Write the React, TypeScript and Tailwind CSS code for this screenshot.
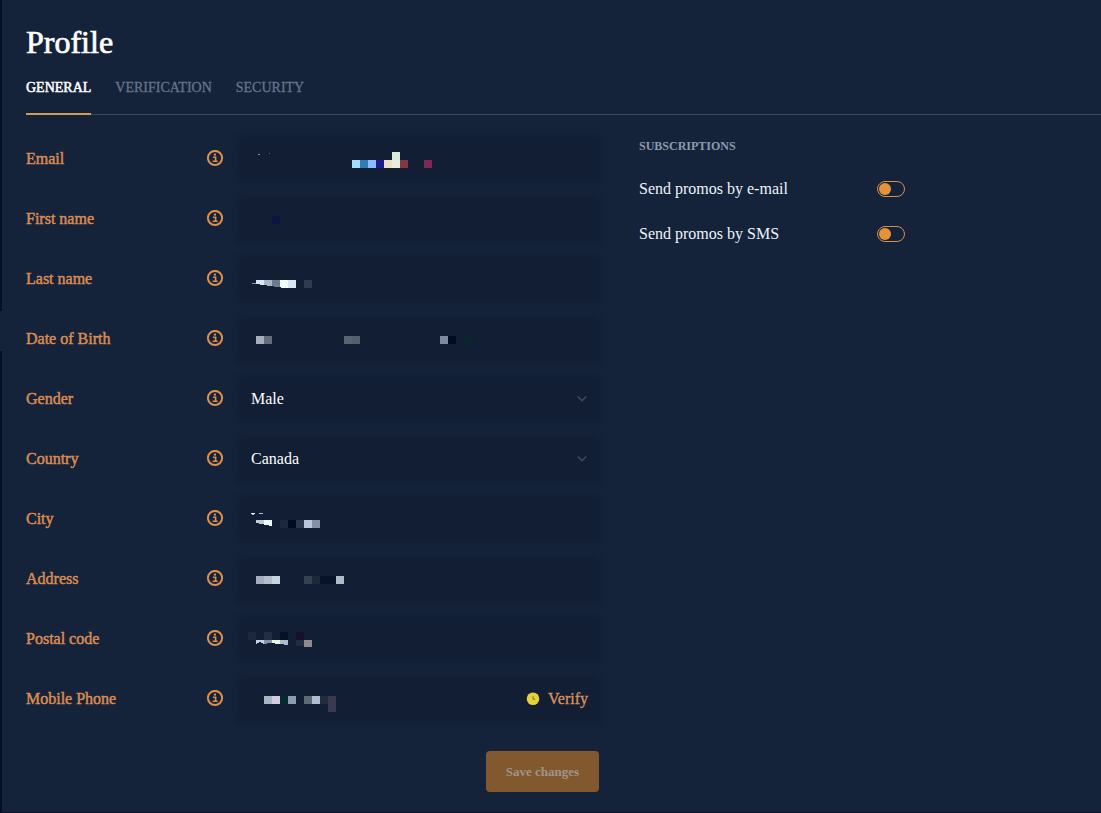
import React, { useState } from 'react';
import { clsx } from 'clsx';

// [x, y, width, height, color] inside the field box
type Cell = [number, number, number, number, string];

interface ProfileField {
  id: string;
  label: string;
  type: 'text' | 'select';
  value?: string;
  options?: string[];
  mask?: Cell[];
  cuts?: string;
  verifiable?: boolean;
}

const TABS = ['General', 'Verification', 'Security'];

const FIELDS: ProfileField[] = [
  {
    id: 'email', label: 'Email', type: 'text',
    mask: [
      [18, 16, 2, 1, '#8793a3'], [29, 15, 1, 1, '#5a6879'],
      [112, 22, 8, 8, '#a5dcfb'], [120, 22, 8, 8, '#337bb4'], [128, 22, 8, 8, '#8fbcff'],
      [136, 22, 8, 8, '#1b1d8a'], [144, 22, 8, 8, '#ece0c4'], [152, 14, 8, 8, '#d9eed9'],
      [152, 22, 8, 8, '#e8ebe0'], [160, 22, 8, 8, '#833646'], [184, 22, 8, 8, '#7c2859'],
    ],
  },
  {
    id: 'firstName', label: 'First name', type: 'text',
    mask: [[32, 18, 8, 8, '#0a1640']],
  },
  {
    id: 'lastName', label: 'Last name', type: 'text',
    mask: [
      [12, 25, 4, 1, '#8793a3'],
      [16, 22, 8, 8, '#dbe5f5'], [24, 22, 8, 8, '#aab6c6'], [32, 22, 8, 8, '#6f7b8f'],
      [40, 22, 8, 8, '#f4ffff'], [48, 22, 8, 8, '#dbe5f5'], [64, 22, 8, 8, '#2f3b50'],
    ],
    cuts: '16,26 44,30 16,30',
  },
  {
    id: 'birthDate', label: 'Date of Birth', type: 'text',
    mask: [
      [16, 18, 8, 8, '#a4afbb'], [24, 18, 8, 8, '#626d7e'],
      [104, 18, 8, 8, '#566573'], [112, 18, 8, 8, '#50606f'],
      [200, 18, 8, 8, '#7f8a9c'], [208, 18, 8, 8, '#020c1f'], [224, 18, 8, 8, '#0a2530'],
    ],
  },
  { id: 'gender', label: 'Gender', type: 'select', value: 'Male', options: ['Male', 'Female'] },
  { id: 'country', label: 'Country', type: 'select', value: 'Canada', options: ['Canada'] },
  {
    id: 'city', label: 'City', type: 'text',
    mask: [
      [11, 15, 4, 1, '#e5edf5'], [12, 16, 2, 1, '#b5c0cc'], [19, 15, 4, 1, '#b5c0cc'],
      [16, 22, 8, 8, '#c2cbd8'], [24, 22, 8, 8, '#eafaff'], [40, 22, 8, 8, '#1a2a3c'],
      [48, 22, 8, 8, '#000c1f'], [56, 22, 8, 8, '#2b374a'], [64, 22, 8, 8, '#bcc6dc'],
      [72, 22, 8, 8, '#8490a8'],
    ],
    cuts: '16,25 32,28 32,30 16,30',
  },
  {
    id: 'address', label: 'Address', type: 'text',
    mask: [
      [16, 18, 8, 8, '#a2adc0'], [24, 18, 8, 8, '#b4becb'], [32, 18, 8, 8, '#c8d4e0'],
      [64, 18, 8, 8, '#354050'], [72, 18, 8, 8, '#1d293a'], [80, 18, 16, 8, '#071427'],
      [96, 18, 8, 8, '#adbccb'],
    ],
  },
  {
    id: 'postalCode', label: 'Postal code', type: 'text',
    mask: [
      [8, 14, 8, 8, '#1b2a3b'], [24, 14, 8, 8, '#222e45'], [40, 14, 8, 8, '#041227'],
      [56, 14, 8, 8, '#180f28'], [16, 22, 8, 8, '#c8d0e4'], [24, 22, 8, 8, '#8891a8'],
      [32, 22, 8, 8, '#e9f8df'], [40, 22, 8, 8, '#aebccb'], [56, 22, 8, 6, '#242c3f'],
      [64, 22, 8, 7, '#8f8a8c'],
    ],
    cuts: '16,26 20,24 24,26 30,25 48,27 48,30 16,30',
  },
  {
    id: 'phone', label: 'Mobile Phone', type: 'text', verifiable: true,
    mask: [
      [24, 18, 8, 8, '#a8b5c4'], [32, 18, 8, 8, '#d5cbdd'], [40, 18, 8, 8, '#04292e'],
      [48, 18, 8, 8, '#8d9db0'], [64, 18, 8, 8, '#5a6b72'], [72, 18, 8, 8, '#b0bcd2'],
      [80, 18, 8, 8, '#232b3c'], [88, 18, 8, 16, '#3a394f'],
    ],
  },
];

const SUBSCRIPTIONS = [
  { id: 'promoEmail', label: 'Send promos by e-mail' },
  { id: 'promoSms', label: 'Send promos by SMS' },
];

const InfoIcon = () => (
  <svg width="18" height="18" viewBox="0 0 18 18" fill="none" stroke="#df8f4d">
    <circle cx="9" cy="8" r="7.1" strokeWidth="2" />
    <path d="M7 7.2h2.6v4.3M6.6 11.3h5" strokeWidth="1.6" />
    <path d="M7.9 4.6h2.1" strokeWidth="2" />
  </svg>
);

const ClockIcon = () => (
  <svg width="14" height="14" viewBox="0 0 14 14">
    <circle cx="7" cy="6.8" r="6.3" fill="#e6d13c" />
    <path d="M7 4v3.2h2.2" fill="none" stroke="#7c7426" />
  </svg>
);

const Chevron = () => (
  <svg className="absolute right-3 top-1/2 -translate-y-1/2 pointer-events-none" width="10" height="8" viewBox="0 0 10 8">
    <path d="M.8 1.5 5 5.8l4.2-4.3" fill="none" stroke="#3f4d60" strokeWidth="1.4" />
  </svg>
);

const FieldRow: React.FC<{ field: ProfileField }> = ({ field }) => {
  const [value, setValue] = useState(field.value || '');
  const control = 'w-full h-full bg-transparent px-[11px] text-white text-base outline-none appearance-none';

  return (
    <div className="flex items-center h-[42px]">
      <label htmlFor={field.id} className="flex-1 text-base text-[#d98b52] [-webkit-text-stroke:0.5px]">{field.label}</label>
      <button type="button" aria-label={`About ${field.label}`} className="mr-4"><InfoIcon /></button>
      <div className="relative w-[359px] h-full rounded bg-[#111e33] shadow-[0_0_6px_#111e33]">
        {field.type === 'select' ? (
          <>
            <select id={field.id} value={value} onChange={e => setValue(e.target.value)} className={control}>
              {field.options?.map(o => <option key={o}>{o}</option>)}
            </select>
            <Chevron />
          </>
        ) : (
          <input id={field.id} value={value} onChange={e => setValue(e.target.value)} className={control} />
        )}
        {field.mask && (
          <svg className="absolute inset-0 w-full h-full pointer-events-none" shapeRendering="crispEdges">
            {field.mask.map(([x, y, w, h, fill], i) => <rect key={i} x={x} y={y} width={w} height={h} fill={fill} />)}
            {field.cuts && <polygon points={field.cuts} fill="#111e33" />}
          </svg>
        )}
        {field.verifiable && (
          <div className="absolute inset-y-0 right-[11px] flex items-center gap-2">
            <ClockIcon />
            <button type="button" className="text-base text-[#dd925e] [-webkit-text-stroke:0.3px]">Verify</button>
          </div>
        )}
      </div>
    </div>
  );
};

const Toggle: React.FC<{ id: string; label: string }> = ({ id, label }) => {
  const [on, setOn] = useState(false);
  return (
    <div className="flex items-center justify-between h-[45px]">
      <label htmlFor={id} className="text-base text-[#eef5fb]">{label}</label>
      <input
        id={id}
        type="checkbox"
        role="switch"
        checked={on}
        onChange={() => setOn(!on)}
        className="appearance-none flex items-center w-7 h-4 rounded-full border border-[#d98f45] px-px before:block before:size-3 before:rounded-full before:bg-[#e4933c] checked:justify-end"
      />
    </div>
  );
};

export default function App() {
  const [activeTab, setActiveTab] = useState('General');

  return (
    <div className="min-h-screen flex bg-[#14223a] border-b border-[#081329] font-['Liberation_Serif',serif]">
      <div className="w-[2px] shrink-0 flex flex-col">
        <div className="h-[311px] bg-[#04102a]" />
        <div className="h-10" />
        <div className="flex-1 bg-[#04102a]" />
      </div>

      <div className="flex-1 pl-6">
        <h1 className="pt-6 text-[32px] leading-9 text-white [-webkit-text-stroke:0.7px]">Profile</h1>

        <nav className="flex gap-6 h-[55px] border-b border-[#3c485b]">
          {TABS.map(tab => (
            <button
              key={tab}
              type="button"
              onClick={() => setActiveTab(tab)}
              className={clsx(
                'h-[55px] pt-0.5 border-b-2 text-sm uppercase',
                activeTab === tab ? 'border-[#d29a55] text-white [-webkit-text-stroke:0.5px]' : 'border-transparent text-[#66748a] [-webkit-text-stroke:0.3px]'
              )}
            >
              {tab}
            </button>
          ))}
        </nav>

        <div className="flex gap-10 pt-[23px]">
          <form className="w-[573px] shrink-0 flex flex-col gap-[18px]" onSubmit={e => e.preventDefault()}>
            {FIELDS.map(field => <FieldRow key={field.id} field={field} />)}
            <button type="submit" className="self-end w-[113px] h-[41px] mt-[13px] rounded bg-[#82582f] text-[13px] font-bold text-[#a1948c]">
              Save changes
            </button>
          </form>

          <section className="w-[266px]">
            <h2 className="text-xs leading-4 font-bold text-[#8c9bb0] mb-3">SUBSCRIPTIONS</h2>
            {SUBSCRIPTIONS.map(s => <Toggle key={s.id} {...s} />)}
          </section>
        </div>
      </div>
    </div>
  );
}
